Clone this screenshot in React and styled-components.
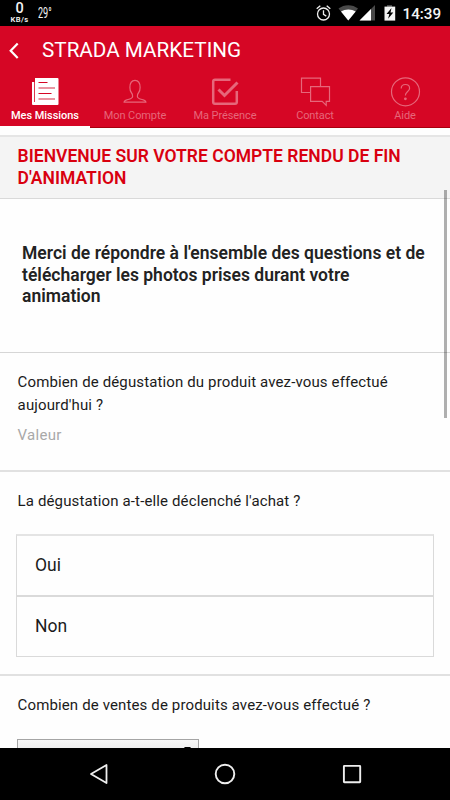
import React from "react";
import styled, { createGlobalStyle } from "styled-components";

const GlobalStyle = createGlobalStyle`
  * { box-sizing: border-box; }
  html, body { margin: 0; padding: 0; background: #000; }
  body { font-family: Roboto, "Liberation Sans", sans-serif; }
`;

const Screen = styled.div`
  width: 450px;
  height: 800px;
  display: flex;
  flex-direction: column;
  overflow: hidden;
  background: #fff;
`;

const StatusBar = styled.div`
  height: 26px;
  flex: none;
  display: flex;
  align-items: center;
  justify-content: space-between;
  padding: 0 8.5px 0 10px;
  background: #000;
  color: #f4f4f4;
`;

const StatusGroup = styled.div`
  display: flex;
  align-items: center;
  height: 26px;
`;

const NetSpeed = styled.div`
  width: 19px;
  display: flex;
  flex-direction: column;
  align-items: center;
  padding-top: 1px;
  white-space: nowrap;
`;

const SpeedValue = styled.span`
  font-size: 14.5px;
  line-height: 12px;
  font-weight: 500;
`;

const SpeedUnit = styled.span`
  font-size: 7.6px;
  line-height: 9px;
  font-weight: 600;
  letter-spacing: 0.4px;
`;

const Temperature = styled.span`
  width: 14px;
  margin-left: 9px;
  font-size: 14px;
  line-height: 27px;
  transform: scaleX(0.65);
  transform-origin: left center;
`;

const Clock = styled.span`
  width: 39px;
  margin-left: 6px;
  font-size: 15.2px;
  line-height: 28px;
  padding-top: 1px;
  font-weight: 500;
  white-space: nowrap;
`;

const Icon = styled.svg`
  display: block;
  flex: none;
  overflow: visible;
`;

const Header = styled.header`
  height: 102px;
  flex: none;
  background: #d60625;
  border-bottom: 1px solid #a8000f;
`;

const TitleBar = styled.div`
  height: 47px;
  display: flex;
  align-items: center;
  gap: 22px;
  padding-left: 9px;
  color: #fff;
`;

const Title = styled.h1`
  margin: 0;
  font-size: 20.7px;
  line-height: 24px;
  font-weight: 400;
  white-space: nowrap;
`;

const Tabs = styled.nav`
  display: grid;
  grid-template-columns: repeat(5, 90px);
  height: 55px;
`;

const Tab = styled.div`
  display: flex;
  flex-direction: column;
  align-items: center;
  height: 55px;
  padding-top: 4px;
  color: ${(p) => (p.$active ? "#fff" : "#e6677a")};
  border-bottom: 2px solid ${(p) => (p.$active ? "#fff" : "transparent")};
`;

const TabLabel = styled.span`
  margin-top: 1px;
  font-size: 11px;
  line-height: 15px;
  letter-spacing: ${(p) => (p.$active ? "-0.05px" : "-0.1px")};
  font-weight: ${(p) => (p.$active ? 500 : 400)};
  white-space: nowrap;
`;

const Content = styled.main`
  position: relative;
  height: 620px;
  flex: none;
  padding-top: 7px;
  overflow: hidden;
  background: #fefefe;
  color: #1b1b1b;
`;

const Banner = styled.section`
  height: 64px;
  padding: 8px 17.6px 0;
  border-top: 2px solid #e5e5e5;
  border-bottom: 1px solid #d9d9d9;
  background: #f4f4f4;
  color: #d9000f;
`;

const StrongLine = styled.div`
  font-size: 17.5px;
  line-height: ${(p) => p.$leading || 22}px;
  font-weight: 600;
  letter-spacing: 0.015px;
  white-space: nowrap;
`;

const Intro = styled.section`
  height: 154px;
  padding: 44px 22px 0;
  border-bottom: 1px solid #d6d6d6;
  color: #222;
`;

const Question = styled.section`
  height: ${(p) => p.$height}px;
  padding: 18px 16px 0 17px;
  border-bottom: 2px solid #e1e1e1;
`;

const QuestionLine = styled.div`
  padding-left: 0.6px;
  font-size: 15px;
  line-height: 23px;
  letter-spacing: 0.13px;
  white-space: nowrap;
`;

const Placeholder = styled.div`
  margin-top: 7px;
  padding-left: 0.6px;
  font-size: 15px;
  line-height: 23px;
  letter-spacing: 0.3px;
  color: #a9a9a9;
`;

const Options = styled.div`
  height: 123px;
  margin: 21px 0 0 -1px;
  border: 1px solid #dadada;
  border-top: 2px solid #e4e4e4;
`;

const Option = styled.div`
  height: 59px;
  padding-left: 18px;
  font-size: 17.5px;
  line-height: 59px;
  & + & {
    height: 61px;
    border-top: 2px solid #dadada;
  }
`;

const SelectBox = styled.div`
  width: 182px;
  height: 26px;
  margin-top: 22px;
  padding: 7px 7px 0 0;
  display: flex;
  justify-content: flex-end;
  border: 1px solid #a5a5a5;
  background: linear-gradient(#f8f8f8, #dedede);
`;

const ScrollThumb = styled.div`
  position: absolute;
  top: 62px;
  right: 3px;
  width: 3px;
  height: 228px;
  background: rgba(0, 0, 0, 0.31);
`;

const NavBar = styled.footer`
  height: 52px;
  flex: none;
  display: grid;
  grid-template-columns: repeat(3, 126.5px);
  justify-content: center;
  align-items: center;
  justify-items: center;
  background: #000;
`;

const MissionsIcon = () => (
  <Icon width="30" height="30" viewBox="0 0 30 30">
    <path d="M5 1h22.500q1 0 1 1v25q0 1-1 1H3q-1 0-1-1V5h3z" fill="#fff" />
    <path d="M4.500 5v20" stroke="#d60625" strokeWidth=".8" />
    <path d="M8.500 5.500h9M8.500 16.500h13" stroke="#d60625" strokeWidth="1.200" />
    <path d="M8.500 11h16.500M8.500 22h16.500" stroke="#e995a1" strokeWidth="1.800" />
  </Icon>
);

const AccountIcon = () => (
  <Icon width="30" height="30" viewBox="0 0 30 30" fill="none" stroke="currentColor" strokeWidth="1.200">
    <path d="M12.600 19.500c.2-1.500-.2-2.700-1.300-4-1-1.200-1.400-2.700-1.400-5 0-5 1.700-7.100 5.100-7.100s5.100 2.100 5.100 7.100c0 2.300-.4 3.800-1.400 5-1.100 1.300-1.500 2.500-1.300 4 .2 1.800 1.400 2.300 4.600 3 2.600.6 3.900 1.200 3.900 2.600H4.100c0-1.400 1.300-2 3.900-2.600 3.200-.7 4.400-1.200 4.600-3z" />
  </Icon>
);

const PresenceIcon = () => (
  <Icon width="30" height="30" viewBox="0 0 30 30" fill="none" stroke="currentColor" strokeWidth="2.500">
    <path d="M20.500 2.700H5q-1.800 0-1.800 1.800v20.500q0 1.800 1.800 1.800h20q1.800 0 1.800-1.800V14" />
    <path d="M8.500 12.500l6 6L27.500 5.500" strokeWidth="3" />
  </Icon>
);

const ContactIcon = () => (
  <Icon width="30" height="30" viewBox="0 0 30 30" fill="none" stroke="currentColor" strokeWidth="1.200">
    <path d="M10 15.500H1.500V1.100h19v8.600" />
    <path d="M10.600 9.700h18.900v14.700h-3.300v4l-4-4H10.600z" />
  </Icon>
);

const HelpIcon = () => (
  <Icon width="30" height="30" viewBox="0 0 30 30" fill="none" stroke="currentColor" strokeWidth="1.200">
    <circle cx="15.500" cy="14.800" r="14" />
    <path d="M11.200 11.500c0-2.600 1.700-4 4.200-4s4.200 1.500 4.200 3.800c0 2-1.300 2.800-2.600 3.900-1.200 1-1.600 1.600-1.600 3.300" />
    <circle cx="15.400" cy="21.800" r=".8" fill="currentColor" />
  </Icon>
);

const tabs = [
  { label: "Mes Missions", Glyph: MissionsIcon, active: true },
  { label: "Mon Compte", Glyph: AccountIcon },
  { label: "Ma Présence", Glyph: PresenceIcon },
  { label: "Contact", Glyph: ContactIcon },
  { label: "Aide", Glyph: HelpIcon },
];

const StatusIcons = () => (
  <Icon width="81" height="18" viewBox="0 0 81 18">
    <g fill="none" stroke="#f0f0f0" strokeWidth="1.300">
      <circle cx="7.500" cy="10" r="6" />
      <path d="M7.500 6.300v4l2.800 1.800M.7 4.800l3.600-3M14.300 4.800l-3.600-3" />
    </g>
    <path d="M22.500 4.500C28 0 36.500 0 42 4.500L32.300 16.500z" fill="#494949" />
    <path d="M25 7.500C29 4.700 35.600 4.700 39.700 7.500L32.300 16.500z" fill="#fff" />
    <path d="M59 1v15.500H43.500z" fill="#494949" />
    <path d="M55 5v11.500H43.500z" fill="#fff" />
    <path d="M71 1h5v2h-5z" fill="#494949" />
    <path d="M68.500 2.600h10.700v14H68.500z" fill="#f4f4f4" />
    <path d="M75.500 4l-5 6h2.800l-1.200 4.800 5.200-6.300h-2.800z" fill="#000" />
  </Icon>
);

export default function App() {
  return (
    <>
      <GlobalStyle />
      <Screen>
        <StatusBar>
          <StatusGroup>
            <NetSpeed>
              <SpeedValue>0</SpeedValue>
              <SpeedUnit>KB/s</SpeedUnit>
            </NetSpeed>
            <Temperature>29°</Temperature>
          </StatusGroup>
          <StatusGroup>
            <StatusIcons />
            <Clock>14:39</Clock>
          </StatusGroup>
        </StatusBar>
        <Header>
          <TitleBar>
            <Icon width="11" height="18" viewBox="0 0 11 18">
              <path d="M8.700 2.500L1.700 9.700l7 7.200" fill="none" stroke="#fff" strokeWidth="2.200" />
            </Icon>
            <Title>STRADA MARKETING</Title>
          </TitleBar>
          <Tabs>
            {tabs.map(({ label, Glyph, active }) => (
              <Tab key={label} $active={active}>
                <Glyph />
                <TabLabel $active={active}>{label}</TabLabel>
              </Tab>
            ))}
          </Tabs>
        </Header>
        <Content>
          <Banner>
            <StrongLine>BIENVENUE SUR VOTRE COMPTE RENDU DE FIN</StrongLine>
            <StrongLine>D'ANIMATION</StrongLine>
          </Banner>
          <Intro>
            <StrongLine $leading={21.6}>Merci de répondre à l'ensemble des questions et de</StrongLine>
            <StrongLine $leading={21.6}>télécharger les photos prises durant votre</StrongLine>
            <StrongLine $leading={21.6}>animation</StrongLine>
          </Intro>
          <Question $height={119}>
            <QuestionLine>Combien de dégustation du produit avez-vous effectué</QuestionLine>
            <QuestionLine>aujourd'hui ?</QuestionLine>
            <Placeholder>Valeur</Placeholder>
          </Question>
          <Question $height={204}>
            <QuestionLine>La dégustation a-t-elle déclenché l'achat ?</QuestionLine>
            <Options>
              <Option>Oui</Option>
              <Option>Non</Option>
            </Options>
          </Question>
          <Question $height={120}>
            <QuestionLine>Combien de ventes de produits avez-vous effectué ?</QuestionLine>
            <SelectBox>
              <Icon width="7" height="4" viewBox="0 0 7 4">
                <path d="M0 0h7L3.500 4z" fill="#000" />
              </Icon>
            </SelectBox>
          </Question>
          <ScrollThumb />
        </Content>
        <NavBar>
          <Icon width="20" height="22" viewBox="0 0 20 22">
            <path d="M17.500 2v18L2 11z" fill="none" stroke="#eee" strokeWidth="1.800" strokeLinejoin="round" />
          </Icon>
          <Icon width="22" height="22" viewBox="0 0 22 22">
            <circle cx="11" cy="11" r="9.300" fill="none" stroke="#eee" strokeWidth="1.900" />
          </Icon>
          <Icon width="20" height="20" viewBox="0 0 20 20">
            <rect x="1.900" y="1.900" width="16.300" height="16.300" rx=".5" fill="none" stroke="#eee" strokeWidth="1.900" />
          </Icon>
        </NavBar>
      </Screen>
    </>
  );
}
